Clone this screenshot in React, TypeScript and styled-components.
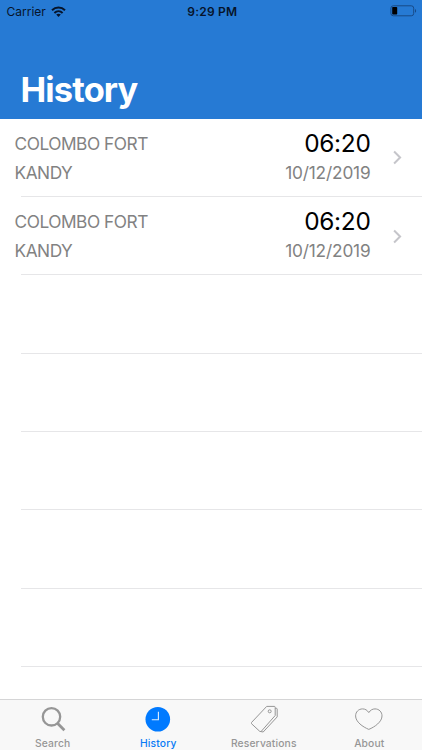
import React from "react";
import styled, { createGlobalStyle } from "styled-components";

const GlobalStyle = createGlobalStyle`
  * { box-sizing: border-box; }
  body { margin: 0; background: #fff; font-family: Inter, "Liberation Sans", sans-serif; }
`;

const Screen = styled.div`
  width: 422px;
  height: 750px;
  display: flex;
  flex-direction: column;
  overflow: hidden;
  background: #fff;
`;

const Header = styled.header`
  height: 118.5px;
  flex: none;
  display: flex;
  flex-direction: column;
  justify-content: space-between;
  background: #267ad4;
`;

const StatusBar = styled.div`
  height: 22px;
  display: grid;
  grid-template-columns: 1fr auto 1fr;
  align-items: center;
  padding: 0 5px 0 6.5px;
  color: #06142b;
`;

const Carrier = styled.div`
  display: flex;
  align-items: center;
  gap: 5px;
  font-size: 12px;
`;

const Clock = styled.div`
  font-size: 12px;
  font-weight: 600;
  letter-spacing: 0.2px;
  padding-left: 1px;
`;

const BatterySlot = styled.div`
  display: flex;
  justify-content: flex-end;
`;

const Title = styled.h1`
  margin: 0 0 7.5px 20.5px;
  font-size: 34.4px;
  line-height: 42px;
  font-weight: 700;
  letter-spacing: -0.85px;
  color: #fff;
`;

const List = styled.main`
  flex: 1;
  min-height: 0;
  overflow: hidden;
`;

const Row = styled.div`
  height: 78.4px;
  display: flex;
  flex-direction: column;
  &::after {
    content: "";
    flex: none;
    height: 1px;
    margin-left: 21px;
    background: #e6e6e8;
  }
`;

const RowBody = styled.div`
  flex: 1;
  display: flex;
  align-items: center;
  padding: 1px 20px 0 14.5px;
`;

const Column = styled.div<{ $end?: boolean }>`
  display: flex;
  flex-direction: column;
  align-items: ${(p) => (p.$end ? "flex-end" : "flex-start")};
  flex: ${(p) => (p.$end ? "none" : "1")};
  margin-right: ${(p) => (p.$end ? "21.5px" : "0")};
`;

const Station = styled.div`
  font-size: 17.3px;
  line-height: 29px;
  letter-spacing: -0.47px;
  color: #828282;
`;

const Time = styled.div`
  font-size: 24.4px;
  line-height: 29px;
  letter-spacing: -0.3px;
  color: #000;
`;

const DateText = styled(Station)`
  letter-spacing: -0.18px;
`;

const TabBar = styled.nav`
  height: 51px;
  flex: none;
  display: grid;
  grid-template-columns: repeat(4, 1fr);
  background: #f8f8f8;
  border-top: 1px solid #d5d5d6;
`;

const Tab = styled.div<{ $active?: boolean }>`
  display: flex;
  flex-direction: column;
  align-items: center;
  padding-top: 3px;
  color: ${(p) => (p.$active ? "#087bf5" : "#969696")};
`;

const TabLabel = styled.span`
  margin-top: 1px;
  font-size: 10.3px;
  line-height: 14px;
  font-weight: 500;
  letter-spacing: 0.13px;
`;

const WifiIcon = () => (
  <svg width="15" height="11" viewBox="0 0 15 11" fill="none" stroke="currentColor" strokeWidth="2">
    <path d="M1 4.2C4.7.6 10.3.6 14 4.2" />
    <path d="M3.4 6.9c2.4-2.2 5.8-2.2 8.2 0" />
    <path d="M7.5 10.9 5.2 8.6c1.3-1.1 3.3-1.1 4.6 0z" fill="currentColor" stroke="none" />
  </svg>
);

const BatteryIcon = () => (
  <svg width="27" height="12" viewBox="0 0 27 12" fill="none">
    <rect x="0.9" y="0.8" width="22.8" height="10" rx="2.4" stroke="#184a87" strokeWidth="1" />
    <rect x="2.2" y="2.1" width="5" height="7.4" rx="0.7" fill="#000" />
    <path d="M25 4v3.8c1.5-.6 1.5-3.2 0-3.8z" fill="#184a87" />
  </svg>
);

const Chevron = () => (
  <svg width="10" height="15" viewBox="0 0 10 15" fill="none" stroke="#c5c5ca" strokeWidth="2">
    <path d="m2.1 1.5 6 6-6 6" />
  </svg>
);

const SearchIcon = () => (
  <svg width="32" height="32" viewBox="0 0 32 32" fill="none" stroke="currentColor">
    <circle cx="14.5" cy="13.8" r="8.7" strokeWidth="2.3" />
    <path d="m20.7 20.5 6.7 6.8" strokeWidth="2.8" />
  </svg>
);

const HistoryIcon = () => (
  <svg width="32" height="32" viewBox="0 0 32 32" fill="none">
    <circle cx="15.8" cy="16.3" r="12.3" fill="#007aff" />
    <path d="M16.4 8.7v8H9.8" stroke="#e0efff" strokeWidth="1.1" />
  </svg>
);

const TagIcon = () => (
  <svg width="32" height="32" viewBox="0 0 32 32" fill="none" stroke="currentColor" strokeWidth="1" strokeLinejoin="round">
    <path d="M18.7 3.4h7.6q.9 0 .9.9v8.2L13 28.6l-1.2-.2-8.3-7.700v-1.200z" />
    <path d="M27.2 5.300h1.200q.8 0 .8.8v7.800L15.200 29l-2.200-.4" />
    <circle cx="21.7" cy="8.3" r="1.5" />
  </svg>
);

const HeartIcon = () => (
  <svg width="32" height="32" viewBox="0 0 32 32" fill="none" stroke="currentColor" strokeWidth="1" strokeLinejoin="round">
    <path d="M15.8 9.6C14.2 7 12 5.9 9.6 5.9c-4 0-7 3-7 7 0 6 7.2 11 13.2 13.5 6-2.5 13.2-7.5 13.2-13.5 0-4-3-7-7-7-2.4 0-4.6 1.1-6.2 3.7z" />
  </svg>
);

const trips = [
  { from: "COLOMBO FORT", to: "KANDY", time: "06:20", date: "10/12/2019" },
  { from: "COLOMBO FORT", to: "KANDY", time: "06:20", date: "10/12/2019" },
];

const tabs = [
  { label: "Search", Icon: SearchIcon },
  { label: "History", Icon: HistoryIcon },
  { label: "Reservations", Icon: TagIcon },
  { label: "About", Icon: HeartIcon },
];

export default function App() {
  return (
    <Screen>
      <GlobalStyle />
      <Header>
        <StatusBar>
          <Carrier>
            Carrier
            <WifiIcon />
          </Carrier>
          <Clock>9:29 PM</Clock>
          <BatterySlot>
            <BatteryIcon />
          </BatterySlot>
        </StatusBar>
        <Title>History</Title>
      </Header>
      <List>
        {trips.map((trip, i) => (
          <Row key={i}>
            <RowBody>
              <Column>
                <Station>{trip.from}</Station>
                <Station>{trip.to}</Station>
              </Column>
              <Column $end>
                <Time>{trip.time}</Time>
                <DateText>{trip.date}</DateText>
              </Column>
              <Chevron />
            </RowBody>
          </Row>
        ))}
        {Array.from({ length: 6 }, (_, i) => (
          <Row key={i}>
            <RowBody />
          </Row>
        ))}
      </List>
      <TabBar>
        {tabs.map(({ label, Icon }) => (
          <Tab key={label} $active={label === "History"}>
            <Icon />
            <TabLabel>{label}</TabLabel>
          </Tab>
        ))}
      </TabBar>
    </Screen>
  );
}
